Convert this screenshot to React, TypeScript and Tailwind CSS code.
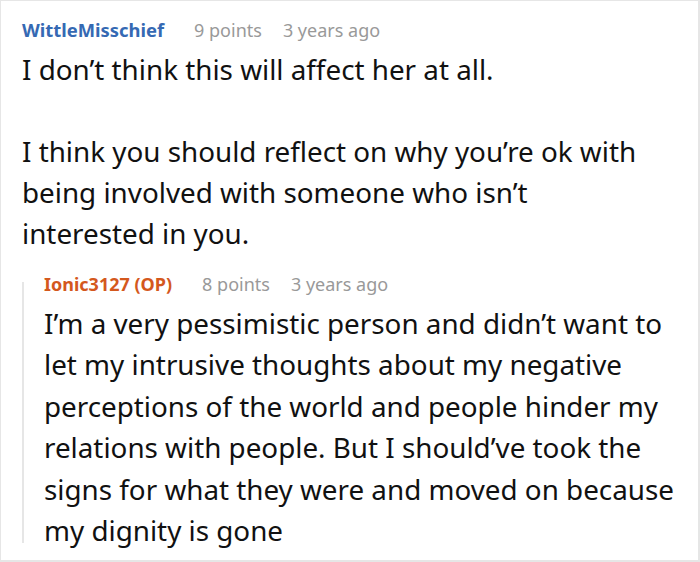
export default function App() {
  return (
    <div
      className="w-[700px] h-[562px] bg-white border-t border-l border-r-2 border-b-2 border-[#e6e6e6] overflow-hidden pl-[21px] pt-[17px]"
      style={{ fontFamily: '"Noto Sans", "Open Sans", sans-serif' }}
    >
      <div className="flex items-baseline text-[18px] leading-[24px]">
        <span className="font-bold text-[18.4px] text-[#3569b3]">WittleMisschief</span>
        <span className="ml-[30px] text-[#999999]">9 points</span>
        <span className="ml-[21px] text-[#999999]">3 years ago</span>
      </div>
      <div className="mt-[7px] w-[632px] text-[27.8px] leading-[41px] text-[#111111]">
        <p>I don’t think this will affect her at all.</p>
        <p className="mt-[41px]">
          I think you should reflect on why you’re ok with being involved with someone who isn’t interested in you.
        </p>
      </div>

      <div className="mt-[18px] flex">
        <div className="w-[2px] mt-[10px] mb-[8px] bg-[#e6e6e6] shrink-0" />
        <div className="pl-[20px] pr-[6px]">
          <div className="flex items-baseline text-[18px] leading-[24px]">
            <span className="font-bold text-[#d4581d]">Ionic3127 (OP)</span>
            <span className="ml-[30px] text-[#999999]">8 points</span>
            <span className="ml-[21px] text-[#999999]">3 years ago</span>
          </div>
          <p className="mt-[7px] text-[27.8px] leading-[41.4px] text-[#111111]">
            I’m a very pessimistic person and didn’t want to let my intrusive thoughts about my negative perceptions of the world and people hinder my relations with people. But I should’ve took the signs for what they were and moved on because my dignity is gone
          </p>
        </div>
      </div>
    </div>
  );
}
